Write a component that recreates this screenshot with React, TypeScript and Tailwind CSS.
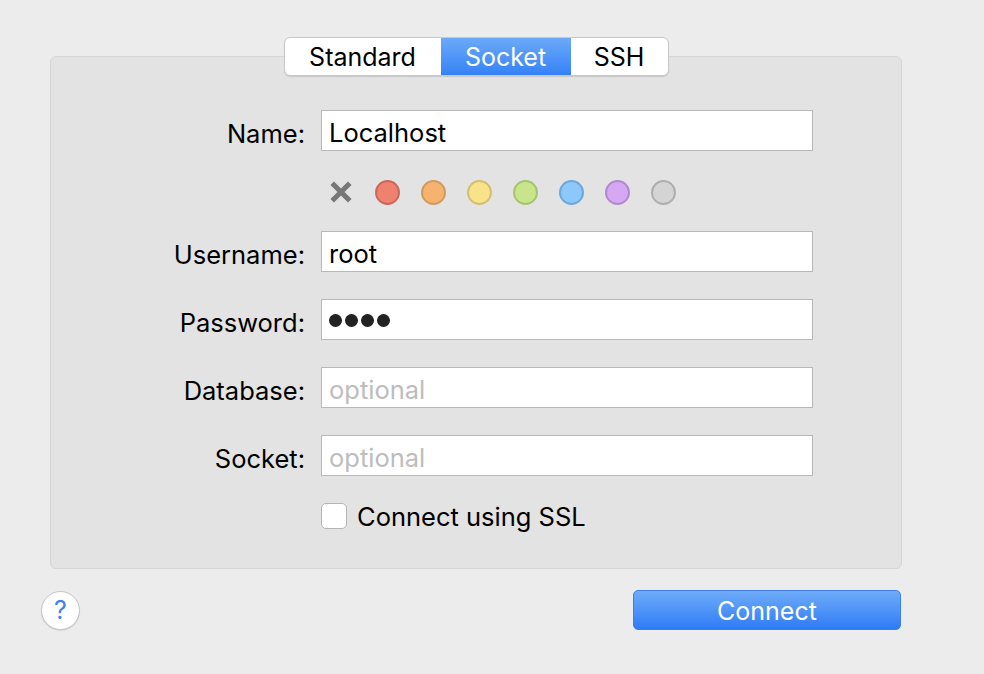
import { useState } from "react";

const DOTS = [
  { fill: "bg-[#ef8170]", ring: "border-[#c9695a]" },
  { fill: "bg-[#f6b36f]", ring: "border-[#d19a5e]" },
  { fill: "bg-[#f9e38a]", ring: "border-[#d3bf72]" },
  { fill: "bg-[#c9e58c]", ring: "border-[#a6c36f]" },
  { fill: "bg-[#8dc8fb]", ring: "border-[#6ea7d9]" },
  { fill: "bg-[#d6a7f3]", ring: "border-[#b389cd]" },
  { fill: "bg-[#d4d4d4]", ring: "border-[#aeaeae]" },
];

const TABS = ["Standard", "Socket", "SSH"];

function Field({ label, value, placeholder, password }: { label: string; value?: string; placeholder?: string; password?: boolean }) {
  return (
    <>
      <label className="h-[41px] pt-[3px] text-right text-[25.5px] text-black leading-[41px]">{label}</label>
      <div className="flex h-[41px] items-center border border-[#b8b8b8] bg-white px-[7px] text-[25.5px]">
        {password ? (
          <span className="flex gap-[3px] pt-[2px]">
            {[0, 1, 2, 3].map((i) => <span key={i} className="h-[13px] w-[13px] rounded-full bg-[#222]" />)}
          </span>
        ) : value ? (
          <span className="pt-[5px] text-black">{value}</span>
        ) : (
          <span className="pt-[5px] text-[#bdbdbd]">{placeholder}</span>
        )}
      </div>
    </>
  );
}

export default function App() {
  const [tab, setTab] = useState("Socket");
  return (
    <div className="h-[674px] w-[984px] bg-[#ececec] font-['Inter','Liberation_Sans',sans-serif] pt-[37px]">
      <div className="relative z-10 mx-[50px] flex w-[852px] justify-center">
        <div className="flex h-[39px] overflow-hidden rounded-[6px] border border-[#c8c8c8] bg-white shadow-[0_1px_1px_rgba(0,0,0,0.12)]">
          {TABS.map((t, i) => (
            <button key={t} onClick={() => setTab(t)}
              className={`${i === 0 ? "w-[156px]" : i === 1 ? "w-[130px]" : "w-[97px]"} pt-[2px] text-[25px] leading-none ${tab === t ? "bg-gradient-to-b from-[#6ba9f8] to-[#3582f6] text-white" : "text-black"} ${i > 0 && tab !== t && tab !== TABS[i - 1] ? "border-l border-[#c8c8c8]" : ""}`}>
              {t}
            </button>
          ))}
        </div>
      </div>
      <div className="mx-[50px] -mt-[20px] h-[513px] w-[852px] rounded-[6px] border border-[#d6d6d6] bg-[#e3e3e3] pt-[53px]">
        <div className="grid grid-cols-[254px_492px] gap-x-[16px] items-center">
          <Field label="Name:" value="Localhost" />
          <div />
          <div className="flex h-[80px] items-center gap-[21px] pl-[9px] pt-[2px]">
            <svg width="22" height="22" viewBox="0 0 22 22" className="mr-[2px]">
              <path d="M4 4 L18 18 M18 4 L4 18" stroke="#777" strokeWidth="5" strokeLinecap="square" />
            </svg>
            {DOTS.map((d, i) => <span key={i} className={`h-[25px] w-[25px] rounded-full border-2 ${d.fill} ${d.ring}`} />)}
          </div>
          <Field label="Username:" value="root" />
          <div className="h-[27px]" /><div />
          <Field label="Password:" password />
          <div className="h-[27px]" /><div />
          <Field label="Database:" placeholder="optional" />
          <div className="h-[27px]" /><div />
          <Field label="Socket:" placeholder="optional" />
          <div />
          <div className="flex h-[82px] items-center gap-[10px] pb-[2px]">
            <span className="h-[26px] w-[26px] rounded-[5px] border border-[#b5b5b5] bg-white" />
            <span className="pt-[2px] text-[25.5px] text-black">Connect using SSL</span>
          </div>
        </div>
      </div>
      <div className="mx-[41px] mt-[21px] flex items-center justify-between pr-[42px]">
        <button className="flex h-[39px] w-[39px] items-center justify-center rounded-full border border-[#c4c4c4] bg-white pt-[2px] text-[25px] text-[#3c82f0] shadow-[0_1px_1px_rgba(0,0,0,0.1)]">?</button>
        <button className="h-[40px] w-[268px] rounded-[5px] border border-[#3d7fe6] bg-gradient-to-b from-[#6eabf8] to-[#2e7bf6] pt-[2px] text-[25px] text-white">Connect</button>
      </div>
    </div>
  );
}
